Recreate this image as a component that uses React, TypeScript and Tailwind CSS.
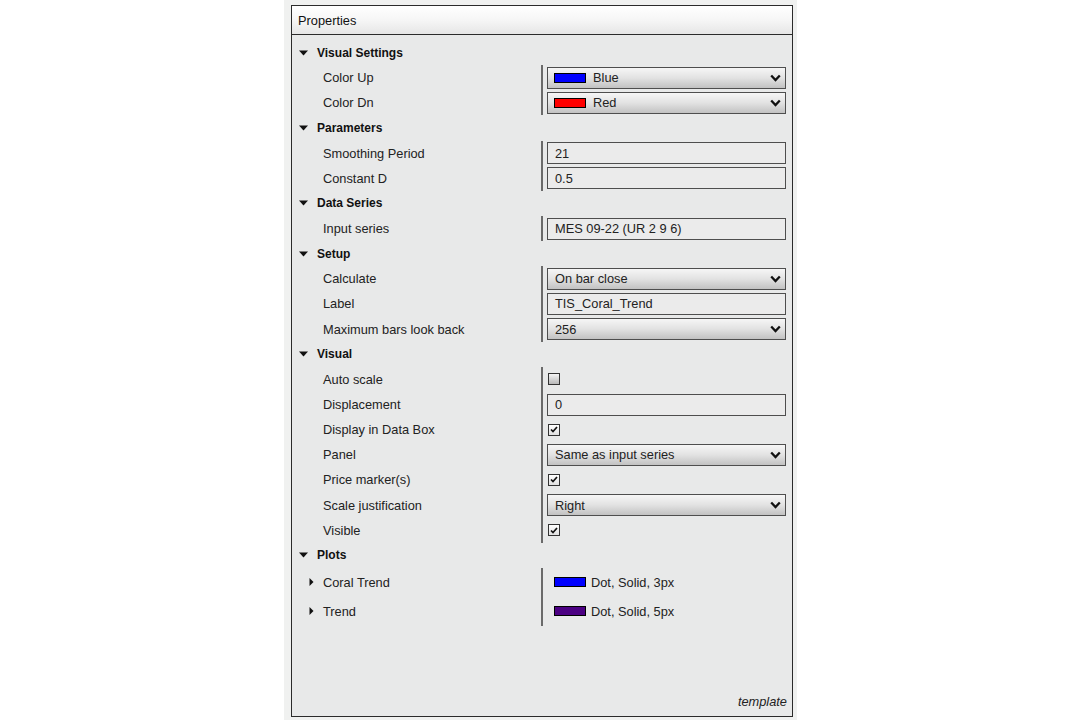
import React from 'react';

type Row =
  | { label: string; kind: 'select'; value: string; swatch?: string }
  | { label: string; kind: 'text'; value: string }
  | { label: string; kind: 'check'; checked: boolean };

type Group = { title: string; rows: Row[] };

const groups: Group[] = [
  {
    title: 'Visual Settings',
    rows: [
      { label: 'Color Up', kind: 'select', value: 'Blue', swatch: '#0000ff' },
      { label: 'Color Dn', kind: 'select', value: 'Red', swatch: '#ff0000' },
    ],
  },
  {
    title: 'Parameters',
    rows: [
      { label: 'Smoothing Period', kind: 'text', value: '21' },
      { label: 'Constant D', kind: 'text', value: '0.5' },
    ],
  },
  {
    title: 'Data Series',
    rows: [{ label: 'Input series', kind: 'text', value: 'MES 09-22 (UR 2 9 6)' }],
  },
  {
    title: 'Setup',
    rows: [
      { label: 'Calculate', kind: 'select', value: 'On bar close' },
      { label: 'Label', kind: 'text', value: 'TIS_Coral_Trend' },
      { label: 'Maximum bars look back', kind: 'select', value: '256' },
    ],
  },
  {
    title: 'Visual',
    rows: [
      { label: 'Auto scale', kind: 'check', checked: false },
      { label: 'Displacement', kind: 'text', value: '0' },
      { label: 'Display in Data Box', kind: 'check', checked: true },
      { label: 'Panel', kind: 'select', value: 'Same as input series' },
      { label: 'Price marker(s)', kind: 'check', checked: true },
      { label: 'Scale justification', kind: 'select', value: 'Right' },
      { label: 'Visible', kind: 'check', checked: true },
    ],
  },
];

const plots = [
  { label: 'Coral Trend', color: '#0000ff', value: 'Dot, Solid, 3px' },
  { label: 'Trend', color: '#4b0082', value: 'Dot, Solid, 5px' },
];

const CaretDown = () => (
  <svg width="9" height="6" viewBox="0 0 9 6" className="shrink-0">
    <path d="M0 0.5H9L4.5 5.5Z" fill="#111" />
  </svg>
);

const CaretRight = () => (
  <svg width="5" height="8" viewBox="0 0 5 8" className="shrink-0">
    <path d="M0.5 0L4.5 4L0.5 8Z" fill="#111" />
  </svg>
);

const Chevron = () => (
  <svg width="11" height="8" viewBox="0 0 11 8" className="shrink-0">
    <path d="M1.2 1.5L5.5 6L9.8 1.5" fill="none" stroke="#111" strokeWidth="2.3" />
  </svg>
);

const Swatch = ({ color }: { color: string }) => (
  <span className="inline-block w-[32px] h-[10px] border border-black shrink-0" style={{ backgroundColor: color }} />
);

const Control = ({ row }: { row: Row }) => {
  if (row.kind === 'select') {
    return (
      <div className="flex items-center w-full h-[22px] border border-[#4e4e4e] bg-gradient-to-b from-[#f6f6f6] via-[#e2e2e2] to-[#c2c2c2] pl-[6px] pr-[4px]">
        {row.swatch && <Swatch color={row.swatch} />}
        <span className={row.swatch ? 'ml-[7px] flex-1' : 'ml-[1px] flex-1'}>{row.value}</span>
        <Chevron />
      </div>
    );
  }
  if (row.kind === 'text') {
    return (
      <div className="flex items-center w-full h-[22px] border border-[#4e4e4e] bg-[#ebebeb] pl-[7px]">
        {row.value}
      </div>
    );
  }
  return (
    <div
      className={
        'ml-[1px] w-[12px] h-[12px] border border-[#333] flex items-center justify-center ' +
        (row.checked ? 'bg-gradient-to-b from-white to-[#e0e0e0]' : 'bg-gradient-to-b from-[#f4f4f4] to-[#b8b8b8]')
      }
    >
      {row.checked && (
        <svg width="8" height="7" viewBox="0 0 8 7">
          <path d="M1 3.5L3 5.5L7 1" fill="none" stroke="#111" strokeWidth="1.7" />
        </svg>
      )}
    </div>
  );
};

const Header = ({ title }: { title: string }) => (
  <div className="flex items-center h-[25.15px] pl-[7px]">
    <CaretDown />
    <span className="ml-[9px] font-bold text-[12px] text-[#111]">{title}</span>
  </div>
);

export default function App() {
  return (
    <div className="w-full h-[720px] bg-white font-['Liberation_Sans',Arial,sans-serif] text-[12.8px] text-[#222] overflow-hidden">
      <div className="ml-[284px] w-[513px] h-[720px] bg-[#f0f1f0] pl-[7px] pr-[4px] pt-[5px] pb-[3px]">
        <div className="w-[502px] h-[712px] border border-[#2b2b2b] bg-[#e8e9e9] flex flex-col">
          <div className="h-[29px] border-b border-[#2b2b2b] bg-gradient-to-b from-white via-[#f6f6f6] to-[#e6e6e6] flex items-center pl-[6px] pt-[1px] text-[#111]">
            Properties
          </div>
          <div className="pt-[5px]">
            {groups.map((g) => (
              <div key={g.title}>
                <Header title={g.title} />
                {g.rows.map((r) => (
                  <div key={r.label} className="flex h-[25.15px]">
                    <div className="w-[249px] pl-[31px] flex items-center">{r.label}</div>
                    <div className="flex-1 border-l-2 border-[#6a6a6a] pl-[4px] pr-[6px] flex items-center">
                      <Control row={r} />
                    </div>
                  </div>
                ))}
              </div>
            ))}
            <Header title="Plots" />
            {plots.map((p) => (
              <div key={p.label} className="flex h-[29px]">
                <div className="w-[249px] pl-[17px] flex items-center">
                  <CaretRight />
                  <span className="ml-[9px]">{p.label}</span>
                </div>
                <div className="flex-1 border-l-2 border-[#6a6a6a] pl-[11px] flex items-center">
                  <Swatch color={p.color} />
                  <span className="ml-[5px]">{p.value}</span>
                </div>
              </div>
            ))}
          </div>
          <div className="flex-1" />
          <div className="text-right italic pr-[5px] pb-[5px] text-[#222]">template</div>
        </div>
      </div>
    </div>
  );
}
